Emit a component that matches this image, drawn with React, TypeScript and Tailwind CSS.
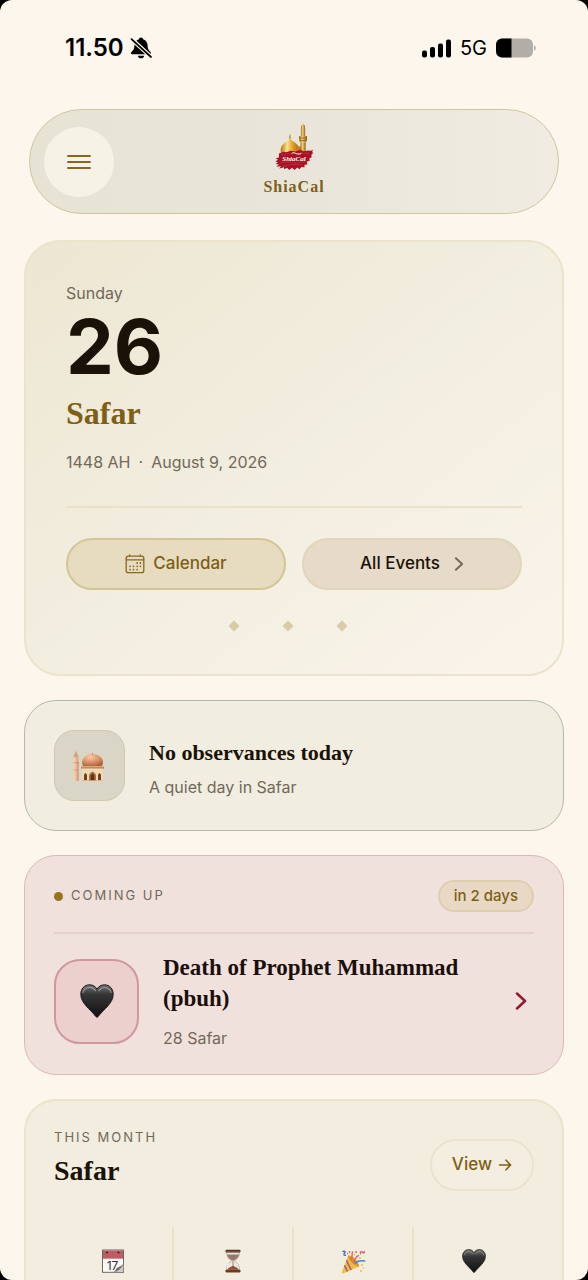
import type { ReactNode } from 'react'

type MonthStat = {
  id: string
  label: string
  icon: ReactNode
}

function BellOffIcon() {
  return (
    <svg viewBox="0 0 22 22" className="h-[22px] w-[22px]" aria-hidden="true">
      <path
        d="M11 .6c-1.200 0-2 .8-2.100 1.700C5.900 3.300 4.400 5.700 4.400 8.600c0 3.200-.8 4.500-2.900 6.500-1 1-.6 2.200.6 2.200h17.800c1.200 0 1.600-1.200.6-2.200-2.100-2-2.900-3.300-2.900-6.500 0-2.900-1.500-5.300-4.500-6.300C13 1.400 12.200.6 11 .6z"
        fill="#000"
      />
      <path d="M7.800 18.700h6.400c-.3 1.600-1.600 2.600-3.200 2.600s-2.900-1-3.200-2.600z" fill="#000" />
      <path d="M1 1.600 21.500 20.200" stroke="#fdf6ec" strokeWidth="4" />
      <path d="M1.500 2.100 21 20" stroke="#000" strokeWidth="1.700" strokeLinecap="round" />
    </svg>
  )
}

function SignalIcon() {
  return (
    <svg viewBox="0 0 29 19" className="h-[19px] w-[29px]" fill="#000" aria-hidden="true">
      <rect x="0" y="11.500" width="5" height="7" rx="2" />
      <rect x="8" y="8" width="5" height="10.500" rx="2" />
      <rect x="16" y="4.500" width="5" height="14" rx="2" />
      <rect x="24" y="0.500" width="5" height="18" rx="2" />
    </svg>
  )
}

function BatteryIcon() {
  return (
    <svg viewBox="0 0 40 20" className="h-5 w-10" aria-hidden="true">
      <rect x="0" y="0.500" width="37" height="19" rx="6" fill="#b0aea6" />
      <path d="M6 .5h9.500v19H6a6 6 0 0 1-6-6v-7a6 6 0 0 1 6-6z" fill="#000" />
      <path d="M38 7.300c1.200.4 1.800 1.400 1.800 2.700s-.6 2.300-1.800 2.700z" fill="#b0aea6" />
    </svg>
  )
}

function MenuIcon() {
  return (
    <svg viewBox="0 0 24 16" className="h-4 w-6" stroke="#86691e" strokeWidth="1.900" strokeLinecap="round" aria-hidden="true">
      <path d="M1 2h22M1 8h22M1 14h22" />
    </svg>
  )
}

function ShrineLogo() {
  return (
    <svg viewBox="0 0 40 50" className="h-[50px] w-10" aria-hidden="true">
      <defs>
        <linearGradient id="dome" x1="0" x2="1">
          <stop offset="0" stopColor="#b87413" />
          <stop offset=".35" stopColor="#fbe08a" />
          <stop offset=".6" stopColor="#e9a92c" />
          <stop offset="1" stopColor="#a5610e" />
        </linearGradient>
        <linearGradient id="minaret" x1="0" x2="1">
          <stop offset="0" stopColor="#a3701f" />
          <stop offset=".4" stopColor="#f2cd73" />
          <stop offset="1" stopColor="#94601b" />
        </linearGradient>
      </defs>
      <path d="M16 11.500v5.500" stroke="#b98324" strokeWidth="1" />
      <circle cx="16" cy="14.200" r=".9" fill="#d39a2c" />
      <path d="M16 15.800c1 2.200 9.200 4.400 9.400 11 0 2.600-.8 4.600-2 6.200H8.600c-1.200-1.600-2-3.600-2-6.200.2-6.600 8.400-8.800 9.400-11z" fill="url(#dome)" />
      <path d="M22.500 24.500c1.800-1.600 3.500-1.600 5.500.2V32h-6z" fill="#c77d1b" />
      <path d="M29 .4 31 3v2.400h-4V3z" fill="url(#minaret)" />
      <path d="M26.900 5.200h4.300v8.300h-4.300z" fill="url(#minaret)" />
      <path d="M25 13h8v4l-1.200 2.500h-5.600L25 17z" fill="url(#minaret)" />
      <path d="M25 15h8M25.700 17.600h6.600" stroke="#8b5a1a" strokeWidth=".8" />
      <path d="M26.500 19.500h5.200V32h-5.200z" fill="url(#minaret)" />
      <path
        d="m5 30.500 4.500-1.800 2.700.6 4.500-1.600 5 .9 4.500-1.800 3.600 1.400 4.600-.8 2.600.4 2-1-.9 2.400 1.300.6-2.200 2.100.6 2-2.700 1.900.9 1.700-3.200 1.300.6 2.700-3 .3.200 2.400-3.200-.3-2 2.400-2-1.700-2.900 2.500-2.300-2.400-3.200 2.200-1.500-2-3.600 1.200.2-1.900-4.800 1.300 1.800-2.600-4.800 1.200 2.600-2.700-3.300-.3 2.400-1.800-2.700-.9 2.700-1.600-2.400-1.500 3.300-.7z"
        fill="#a71224"
      />
      <path d="m6 39.500 8-.8 9 1.400 10-2M7 31.500l9-.8 12-.6 7 .2M9 43l9-1.600 11 .6" stroke="#c93444" strokeWidth=".7" fill="none" />
      <text x="20" y="38.200" textAnchor="middle" fill="#fff" fontSize="7" fontStyle="italic" fontWeight="700" fontFamily="Liberation Serif, serif">
        ShiaCal
      </text>
      <path d="M18 30.300c2.500-2.600 3.500 2.300 9 .4" stroke="#fff" strokeWidth="1" fill="none" strokeLinecap="round" />
    </svg>
  )
}

function CalendarIcon() {
  return (
    <svg viewBox="0 0 20 20" className="h-5 w-5" fill="none" stroke="#86691e" strokeWidth="1.300" strokeLinecap="round" aria-hidden="true">
      <rect x="1.200" y="2.200" width="17.600" height="16.400" rx="2.200" />
      <path d="M1.200 5.800h17.600M4.600 1v1.200M15.400 1v1.200" />
      <g fill="#86691e" stroke="none">
        <circle cx="12.200" cy="9" r=".9" />
        <circle cx="15.400" cy="9" r=".9" />
        <circle cx="5" cy="12.300" r=".9" />
        <circle cx="8.500" cy="12.300" r=".9" />
        <circle cx="12.200" cy="12.300" r=".9" />
        <circle cx="15.400" cy="12.300" r=".9" />
        <circle cx="5" cy="15.600" r=".9" />
        <circle cx="8.500" cy="15.600" r=".9" />
        <circle cx="12.200" cy="15.600" r=".9" />
      </g>
    </svg>
  )
}

function ChevronIcon({ className }: { className: string }) {
  return (
    <svg viewBox="0 0 12 18" className={className} fill="none" stroke="currentColor" strokeLinecap="round" strokeLinejoin="round" aria-hidden="true">
      <path d="m2 1.500 8 7.500-8 7.500" />
    </svg>
  )
}

function ArrowIcon() {
  return (
    <svg viewBox="0 0 14 14" className="h-[14px] w-[14px]" fill="none" stroke="currentColor" strokeWidth="1.600" strokeLinecap="round" strokeLinejoin="round" aria-hidden="true">
      <path d="M1.500 7h11M8 2.200 12.600 7 8 11.800" />
    </svg>
  )
}

function Diamond() {
  return (
    <svg viewBox="0 0 12 12" className="h-3 w-3" aria-hidden="true">
      <path d="m6 .5 5.500 5.500L6 11.500.5 6z" fill="#d8cba8" />
    </svg>
  )
}

function MosqueIcon() {
  return (
    <svg viewBox="0 0 32 32" className="mr-[3px] h-8 w-8" aria-hidden="true">
      <defs>
        <radialGradient id="mosque-dome" cx=".4" cy=".25" r=".8">
          <stop offset="0" stopColor="#f8cba6" />
          <stop offset=".5" stopColor="#dd9468" />
          <stop offset="1" stopColor="#a85c3b" />
        </radialGradient>
        <linearGradient id="mosque-tower" x1="0" x2="1">
          <stop offset="0" stopColor="#f6d8c0" />
          <stop offset=".5" stopColor="#eebd9d" />
          <stop offset="1" stopColor="#c98a6a" />
        </linearGradient>
      </defs>
      <path d="M4 .8 6.200 6v2.400H1.800V6z" fill="#dc9d7c" />
      <path d="M1.800 7h4.400v4.500H1.800zM1 11.500h6v2H1zM1.300 13.500h5.400V31H1.300z" fill="url(#mosque-tower)" />
      <path d="M1 12.800h6M1.300 20h5.400" stroke="#c98a6a" strokeWidth=".6" />
      <path d="M20.500 2.800v2" stroke="#b87550" strokeWidth=".8" />
      <path d="M20.500 4c6 .4 10.500 3.800 10.500 8.500 0 1.600-.6 3-1.800 4H11.800c-1.200-1-1.800-2.400-1.800-4 0-4.700 4.500-8.100 10.500-8.500z" fill="url(#mosque-dome)" />
      <path d="M9 16.300h23v2.400H9z" fill="#b98a53" />
      <path d="M9 16.300h23v.8H9z" fill="#e3b980" />
      <path d="M10 18.700h21V31H10z" fill="#f2d9b4" />
      <path d="M17 31v-5.500c0-2 1.700-3 3.500-4 1.800 1 3.500 2 3.500 4V31z" fill="#a8723d" />
      <path d="M18.700 31v-5c0-1.200.8-2 1.800-2.600 1 .6 1.800 1.400 1.800 2.600v5z" fill="#5f3414" />
      <path d="M12 30v-4.500c0-1.200.7-2 1.500-2.500.8.500 1.500 1.300 1.500 2.500V30zM26 30v-4.500c0-1.200.7-2 1.500-2.500.8.500 1.500 1.300 1.500 2.500V30z" fill="#743d1c" />
      <path d="M10 30.200h21v.8H10z" fill="#d7b27c" />
    </svg>
  )
}

function HeartIcon({ className }: { className: string }) {
  return (
    <svg viewBox="0 0 34 34" className={className} aria-hidden="true">
      <defs>
        <linearGradient id="heart" x1="0" y1="0" x2="0" y2="1">
          <stop offset="0" stopColor="#737373" />
          <stop offset=".3" stopColor="#363636" />
          <stop offset=".65" stopColor="#222" />
          <stop offset="1" stopColor="#111" />
        </linearGradient>
      </defs>
      <path
        d="M17 5.200C15.400 2.200 12.600.8 9.500.8 4.300.8.8 4.900.8 10.300c0 9.100 9.400 14.700 15.300 22.500.5.6 1.300.6 1.800 0C23.800 25 33.200 19.400 33.200 10.300c0-5.400-3.500-9.500-8.700-9.500-3.100 0-5.900 1.400-7.500 4.400z"
        fill="url(#heart)"
        stroke="#1c1c1e"
        strokeWidth="1"
      />
      <path d="M3 8.500c1.300-5.200 8.700-7.200 12.500-1.800M19 6.700c3.600-5.200 10.500-3.600 12 1.800" stroke="#a6a6a6" strokeWidth="1.200" strokeLinecap="round" fill="none" opacity=".7" />
    </svg>
  )
}

function TearOffIcon() {
  return (
    <svg viewBox="0 0 24 24" className="h-6 w-6" aria-hidden="true">
      <rect x="1.500" y="1" width="21" height="22.300" fill="#fdfcfa" stroke="#6b6765" strokeWidth="1" />
      <path d="M2 1.500h20V10H2z" fill="#bd5c64" />
      <path d="M2 9.600h20" stroke="#e2a5a8" strokeWidth=".8" />
      <circle cx="6" cy="3.500" r="1.100" fill="#4c1c22" />
      <circle cx="17.500" cy="3.500" r="1.100" fill="#4c1c22" />
      <text x="11.500" y="20.800" textAnchor="middle" fontSize="12" fontFamily="Inter, sans-serif" fill="#2f2f31">
        17
      </text>
      <path d="M22.300 14.500c-2 3.200-4.300 3-6 4.300-1.300 1-1.600 2.500-3.300 4.300h9.300z" fill="#d0ccc8" />
      <path d="M22.300 14.500c-1.600 3-4.200 3.100-6 4.300-1.300 1-1.600 2.500-3.300 4.300 3.600-.5 8.500-4 9.300-8.600z" fill="#77726f" />
    </svg>
  )
}

function HourglassIcon() {
  return (
    <svg viewBox="0 0 24 24" className="h-6 w-6" aria-hidden="true">
      <path d="M5.500 3h13c0 4.500-2 7-5 9 3 2 5 4.500 5 9h-13c0-4.500 2-7 5-9-3-2-5-4.500-5-9z" fill="#ece9e3" stroke="#aaa49c" strokeWidth=".7" />
      <path d="M5.900 5.600h12.200c-.6 2.700-2.600 4.500-4.900 5.600h-2.400c-2.300-1.100-4.300-2.900-4.900-5.600z" fill="#93796a" />
      <path d="M12 11v8" stroke="#9c6546" strokeWidth=".8" />
      <path d="M12 16.800c2.800 1.200 5 2.200 5.600 4H6.400c.6-1.800 2.800-2.800 5.600-4z" fill="#91512f" />
      <rect x="4.500" y=".8" width="15" height="2.600" rx=".8" fill="#5a3422" />
      <path d="M5 2.600h14" stroke="#96694c" strokeWidth=".6" />
      <rect x="4.500" y="20.800" width="15" height="2.600" rx=".8" fill="#6a3c25" />
      <path d="M7.500 14.500c-.8 1.300-1.200 2.500-1.300 4" stroke="#fff" strokeWidth="1" fill="none" />
    </svg>
  )
}

function PartyIcon() {
  return (
    <svg viewBox="0 0 26 26" className="h-[26px] w-[26px]" aria-hidden="true">
      <path d="M8.200 6.500 19 17.500 3.200 24.500c-1 .4-1.700-.3-1.300-1.300z" fill="#f2bd3d" />
      <path d="M8.200 6.500c-.4 4.200 6.500 11.300 10.800 11 .5-4.500-6.400-11.500-10.800-11z" fill="#dc9627" />
      <path d="m6.500 11.300 4.700 9.700M4.500 16.300l3 6.200" stroke="#9b5d8c" strokeWidth="1.500" />
      <path d="M11.500 11c1-2.500.2-5.500 1-8M13 13c3-3 2.500-5.500 5.500-6.500" stroke="#e06a60" strokeWidth="1.500" fill="none" strokeLinecap="round" />
      <path d="M15 14c2.800-2.200 6-2.600 9.500-2" stroke="#4b83cf" strokeWidth="1.700" fill="none" strokeLinecap="round" />
      <path d="M3 2.500c2-.8 2.800.8 1.500 1.800S4 6.500 5.500 6.300" stroke="#4269c2" strokeWidth="1.400" fill="none" strokeLinecap="round" />
      <path d="M20.500 4.800c-.6-2 .9-2.700 2-1.500s2 .6 1.700-1" stroke="#d9576b" strokeWidth="1.300" fill="none" strokeLinecap="round" />
      <g fill="#e0616c">
        <circle cx="9.500" cy="3" r=".9" />
        <circle cx="16" cy="3" r="1" />
        <circle cx="7.500" cy="4.500" r=".7" />
      </g>
      <g fill="#efb73a">
        <circle cx="20" cy="9" r="1" />
        <circle cx="22" cy="16" r=".9" />
        <circle cx="23.500" cy="19" r=".8" />
        <circle cx="21" cy="22" r="1" />
        <circle cx="14.500" cy="5.500" r=".8" />
      </g>
    </svg>
  )
}

const monthStats: MonthStat[] = [
  { id: 'days', label: 'Days', icon: <TearOffIcon /> },
  { id: 'left', label: 'Remaining', icon: <HourglassIcon /> },
  { id: 'joy', label: 'Celebrations', icon: <PartyIcon /> },
  { id: 'grief', label: 'Mourning', icon: <HeartIcon className="h-6 w-6" /> },
]

const serif = "font-['Liberation_Serif',serif] font-bold"

function StatusBar() {
  return (
    <div className="flex h-24 items-center justify-between pr-[52px] pl-[65px] text-black">
      <div className="flex items-center gap-[6px]">
        <span className="text-2xl font-semibold">11.50</span>
        <BellOffIcon />
      </div>
      <div className="flex items-center gap-[9px]">
        <SignalIcon />
        <span className="text-xl">5G</span>
        <BatteryIcon />
      </div>
    </div>
  )
}

function Header() {
  return (
    <header className="mx-[29px] mt-[13px] grid h-[105px] grid-cols-[70px_1fr_70px] items-center rounded-full border border-[#cfc4a2] bg-linear-to-r from-[#e7e3d4] via-[#e9e5da] to-[#f0ece2] px-[14px]">
      <button type="button" aria-label="Menu" className="flex h-[70px] w-[70px] items-center justify-center rounded-full bg-[#f6f2e6]">
        <MenuIcon />
      </button>
      <div className="flex flex-col items-center pb-1">
        <ShrineLogo />
        <span className={`${serif} mt-1 text-base leading-5 tracking-[1px] text-[#7d6119]`}>ShiaCal</span>
      </div>
    </header>
  )
}

function TodayCard() {
  return (
    <section className="rounded-[36px] border-2 border-[#ebe3cc] bg-linear-to-br from-[#ede6d2] via-[#f2eee0] to-[#faf4ea] px-10 pt-10 pb-[42px]">
      <p className="text-base leading-[22px] text-[#716959]">Sunday</p>
      <p className="text-[76px] leading-[84px] font-bold text-[#1a1206]">26</p>
      <h1 className={`${serif} text-[32px] leading-[50px] text-[#7d5f16]`}>Safar</h1>
      <p className="mt-3 flex gap-2 text-base leading-6 text-[#716959]">
        <span>1448 AH</span>
        <span>·</span>
        <span>August 9, 2026</span>
      </p>
      <hr className="mt-8 border-t-2 border-[#ebe1cb]" />
      <div className="mt-[30px] grid grid-cols-2 gap-4">
        <button type="button" className="flex h-[52px] items-center justify-center gap-2 rounded-full border-2 border-[#d3c696] bg-[#e8dcc0] text-[17px] font-medium text-[#7d5f16]">
          <CalendarIcon />
          Calendar
        </button>
        <button type="button" className="flex h-[52px] items-center justify-center gap-[14px] rounded-full border-2 border-[#e1d5bc] bg-[#e6dac8] text-[17px] font-medium text-[#1a1206]">
          All Events
          <ChevronIcon className="h-[14px] w-[10px] stroke-[2.5] text-[#75695a]" />
        </button>
      </div>
      <div className="mt-[30px] flex justify-center gap-[42px] pr-3">
        <Diamond />
        <Diamond />
        <Diamond />
      </div>
    </section>
  )
}

function ObservanceCard() {
  return (
    <section className="flex items-center gap-6 rounded-[32px] border border-[#b3bba6] bg-[#f1ede0] px-[29px] py-[29px]">
      <div className="flex h-[71px] w-[71px] shrink-0 items-center justify-center rounded-[20px] border border-[#cfcab0] bg-[#d9d6c8]">
        <MosqueIcon />
      </div>
      <div>
        <h2 className={`${serif} text-[22px] leading-10 text-[#1a1206]`}>No observances today</h2>
        <p className="mt-[3px] text-base leading-[22px] text-[#716959]">A quiet day in Safar</p>
      </div>
    </section>
  )
}

function ComingUpCard() {
  return (
    <section className="rounded-[32px] border border-[#dbb9b7] bg-[#f1e1dd] px-[29px] py-6">
      <div className="flex items-center justify-between">
        <div className="flex items-center gap-2 text-[13px] tracking-[2px] text-[#716959]">
          <span className="h-[9px] w-[9px] rounded-full bg-[#94741c]" />
          COMING UP
        </div>
        <span className="flex h-8 items-center rounded-full border-2 border-[#dfceae] bg-[#e8d8c4] px-[14px] text-[15px] font-medium text-[#7d5f16]">in 2 days</span>
      </div>
      <hr className="mt-5 border-t-2 border-[#e7cfce]" />
      <a href="#event" className="mt-[18px] flex items-center gap-6">
        <span className="flex h-[85px] w-[85px] shrink-0 items-center justify-center rounded-[26px] border-2 border-[#cf989c] bg-[#ebd0ce]">
          <HeartIcon className="h-[34px] w-[34px]" />
        </span>
        <span className="min-w-0 flex-1">
          <span className={`${serif} block text-[23px] leading-[31px] text-[#1a0f0a]`}>Death of Prophet Muhammad (pbuh)</span>
          <span className="mt-3 block text-base leading-6 text-[#716959]">28 Safar</span>
        </span>
        <ChevronIcon className="mr-[7px] h-[18px] w-3 stroke-[2.5] text-[#96192e]" />
      </a>
    </section>
  )
}

function MonthCard() {
  return (
    <section className="rounded-[32px] border-2 border-[#ebe3cc] bg-[#f2eddf] px-7 pt-[26px] pb-7">
      <div className="flex items-end justify-between">
        <div>
          <p className="text-[13px] leading-5 tracking-[2px] text-[#716959]">THIS MONTH</p>
          <h2 className={`${serif} mt-1 text-[28px] leading-10 text-[#1a1206]`}>Safar</h2>
        </div>
        <a href="#month" className="flex h-[52px] items-center gap-[6px] rounded-full border-2 border-[#ebe3ce] bg-[#f4eee0] px-5 text-[17px] font-medium text-[#7d5f16]">
          View
          <ArrowIcon />
        </a>
      </div>
      <ul className="mt-9 grid grid-cols-4">
        {monthStats.map((stat) => (
          <li key={stat.id} title={stat.label} className="flex h-32 justify-center border-r-2 border-[#ebe1cb] pt-[22px] last:border-r-0">
            {stat.icon}
          </li>
        ))}
      </ul>
    </section>
  )
}

export default function App() {
  return (
    <div className="h-screen bg-black font-['Inter',sans-serif]">
      <div className="h-full overflow-hidden rounded-xl bg-[#fdf6ec]">
        <StatusBar />
        <Header />
        <main className="mt-[26px] flex flex-col gap-6 px-6">
          <TodayCard />
          <ObservanceCard />
          <ComingUpCard />
          <MonthCard />
        </main>
      </div>
    </div>
  )
}
